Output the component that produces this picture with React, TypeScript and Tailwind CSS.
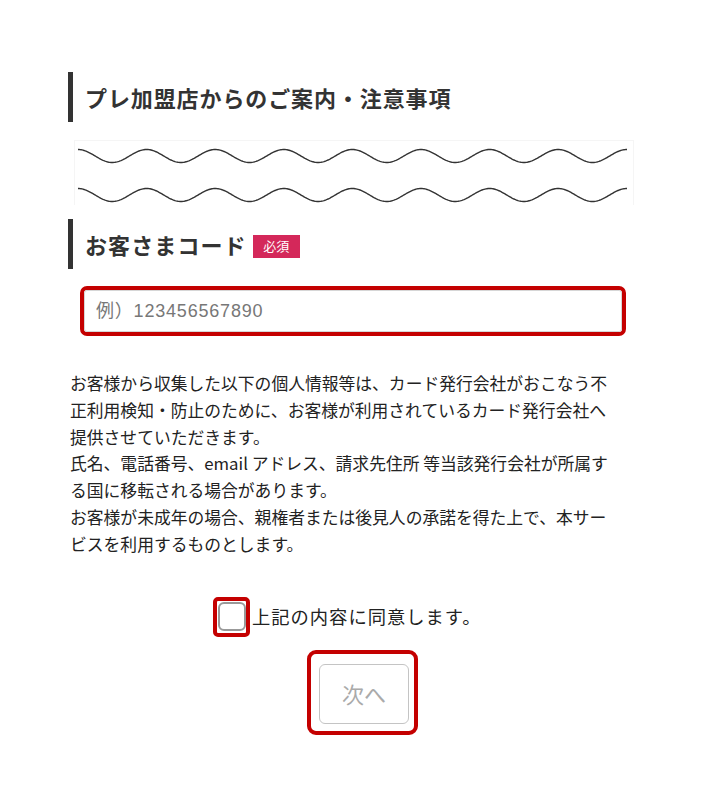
import React from 'react';

const FONT = '"Noto Sans CJK JP", "Noto Sans", "Liberation Sans", sans-serif';
const INPUT_FONT = '"Liberation Sans", "Noto Sans CJK JP", sans-serif';

function wavePath(cy: number, amp: number, period: number, width: number) {
    const pts: string[] = [];
    for (let x = 0; x <= width; x += 1) {
        const y = cy - amp * Math.cos((2 * Math.PI * x) / period);
        pts.push(`${x === 0 ? 'M' : 'L'}${(x + 3).toFixed(1)} ${y.toFixed(2)}`);
    }
    return pts.join(' ');
}

function SectionTitle({ children }: { children: React.ReactNode }) {
    return (
        <div className="flex items-center h-[50px] border-l-[5px] border-[#333] pl-[12px]">
            {children}
        </div>
    );
}

export default function App() {
    return (
        <div className="min-h-[807px] w-[704px] bg-white text-[#222]" style={{ fontFamily: FONT }}>
            <div className="pl-[68px] pt-[72px] w-[634px]">
                {/* Notice heading */}
                <SectionTitle>
                    <h2 className="text-[22px] font-bold text-[#333] tracking-[0.9px]">
                        プレ加盟店からのご案内・注意事項
                    </h2>
                </SectionTitle>

                {/* Wave box */}
                <div className="mt-[18px] ml-[6px] h-[65px] w-[560px] border border-b-0 border-[#f5f5f5]">
                    <svg width="558" height="65" viewBox="0 0 558 65" fill="none">
                        <path d={wavePath(15, 6.5, 68.6, 549)} stroke="#333" strokeWidth="1.4" />
                        <path d={wavePath(54, 6.5, 68.6, 549)} stroke="#333" strokeWidth="1.4" />
                    </svg>
                </div>

                {/* Customer code */}
                <div className="mt-[14px]">
                    <SectionTitle>
                        <h2 className="text-[22px] font-bold text-[#333] tracking-[1.1px]">お客さまコード</h2>
                        <span className="ml-[6px] mt-[4px] inline-flex h-[23px] w-[47px] items-center justify-center bg-[#d4285a] text-[13px] text-white">
                            必須
                        </span>
                    </SectionTitle>
                </div>

                <div className="mt-[17px] ml-[12px] w-[546px] h-[50px] rounded-[7px] border-[4px] border-[#c40000] bg-white">
                    <input
                        type="text"
                        placeholder="例）123456567890"
                        className="h-full w-full rounded-[3px] border border-[#d6d6d6] bg-white pl-[11px] text-[18px] tracking-[0.8px] text-[#333] outline-none placeholder:text-[#777]"
                        style={{ fontFamily: INPUT_FONT }}
                    />
                </div>

                {/* Notice text */}
                <p className="mt-[34px] ml-[2px] text-[16.8px] leading-[26.8px] text-[#222]">
                    お客様から収集した以下の個人情報等は、カード発行会社がおこなう不<br />
                    正利用検知・防止のために、お客様が利用されているカード発行会社へ<br />
                    提供させていただきます。<br />
                    氏名、電話番号、email アドレス、請求先住所 等当該発行会社が所属す<br />
                    る国に移転される場合があります。<br />
                    お客様が未成年の場合、親権者または後見人の承諾を得た上で、本サー<br />
                    ビスを利用するものとします。
                </p>

                {/* Agreement */}
                <label className="mt-[39px] ml-[145px] flex items-center cursor-pointer">
                    <span className="flex h-[40px] w-[37px] items-center justify-center rounded-[5px] border-[4px] border-[#c40000] bg-white">
                        <span className="block h-[29px] w-[28px] rounded-[6px] border-[2px] border-[#999] bg-white" />
                    </span>
                    <span className="ml-[2px] text-[18.3px] tracking-[1px] text-[#222]">上記の内容に同意します。</span>
                </label>

                <div className="mt-[13px] ml-[239px] flex h-[85px] w-[111px] items-center justify-center rounded-[9px] border-[4px] border-[#c40000] pl-[3px] pt-[3px]">
                    <button
                        type="button"
                        disabled
                        className="flex h-[60px] w-[90px] items-center justify-center rounded-[6px] border border-[#c4c4c4] bg-white text-[22px] text-[#aaa]"
                        style={{ fontFamily: FONT }}
                    >
                        次へ
                    </button>
                </div>
            </div>
        </div>
    );
}
